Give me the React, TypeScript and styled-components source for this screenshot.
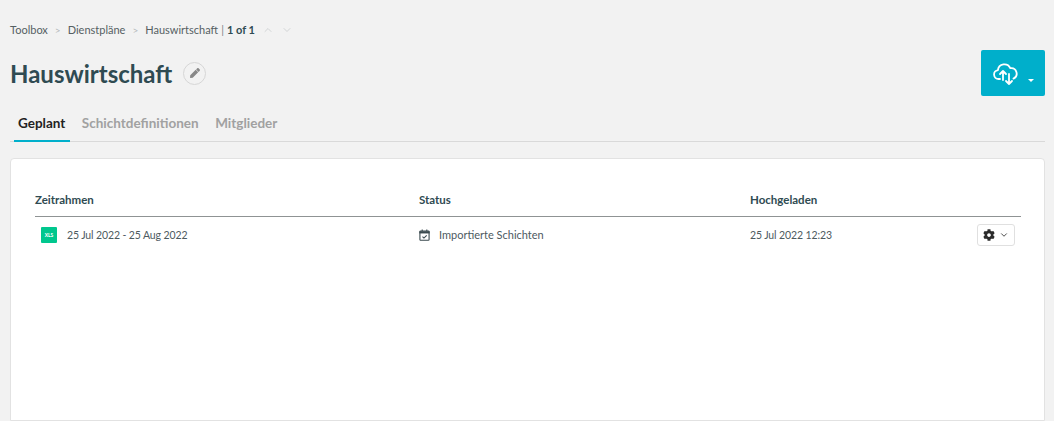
import React from 'react';
import styled, { createGlobalStyle } from 'styled-components';
import { LuChevronDown, LuChevronUp } from 'react-icons/lu';
import { FaCog, FaPen } from 'react-icons/fa';

const GlobalStyle = createGlobalStyle`
    html, body {
        margin: 0;
        height: 100%;
        overflow: hidden;
        background: #f2f2f2;
        font-family: "Lato", "Noto Sans", sans-serif;
        color: #2f4b52;
    }
`;

const Page = styled.div`
    height: 421px;
    padding: 0 9px 0 10px;
    display: flex;
    flex-direction: column;
    overflow: hidden;
`;

const Breadcrumbs = styled.nav`
    display: flex;
    align-items: center;
    height: 20px;
    margin-top: 20px;
    font-size: 11px;
    line-height: 18px;
    color: #555f63;
`;

const Separator = styled.span`
    color: #b4b9bb;
    margin: 0 7px 0 7px;
    font-size: 10px;
`;

const Pager = styled.strong`
    color: #2f4b52;
    font-weight: 700;
    margin-left: 3px;
`;

const PagerDivider = styled.span`
    color: #7c8588;
    margin-left: 3px;
`;

const PagerArrows = styled.span`
    display: flex;
    gap: 7px;
    margin-left: 7px;
    color: #d2d5d6;
    font-size: 12px;
`;

const TitleRow = styled.div`
    display: flex;
    align-items: flex-start;
    justify-content: space-between;
    margin-top: 10px;
    height: 46px;
`;

const TitleGroup = styled.div`
    display: flex;
    align-items: center;
    gap: 11px;
    height: 26px;
    margin-top: 10px;
`;

const Title = styled.h1`
    margin: 0;
    font-size: 24px;
    font-weight: 700;
    color: #2f4b52;
`;

const EditButton = styled.button`
    width: 23px;
    height: 23px;
    padding: 0;
    border: 1px solid #d6d6d6;
    border-radius: 50%;
    background: transparent;
    color: #888;
    font-size: 10px;
    display: flex;
    align-items: center;
    justify-content: center;
`;

const UploadButton = styled.button`
    width: 64px;
    height: 46px;
    padding: 0 0 0 11px;
    border: 0;
    border-radius: 2px;
    background: #00afcb;
    color: #fff;
    position: relative;
    display: flex;
    align-items: center;
`;

const Caret = styled.span`
    position: absolute;
    right: 11px;
    bottom: 14px;
    border-left: 3px solid transparent;
    border-right: 3px solid transparent;
    border-top: 3px solid #fff;
`;

const Tabs = styled.div`
    display: flex;
    gap: 7.5px;
    height: 35px;
    margin-top: 11px;
    border-bottom: 1px solid #d9d9d9;
    box-sizing: border-box;
    padding-left: 4px;
`;

const Tab = styled.div<{ $active?: boolean }>`
    padding: 0 5px 0 4px;
    height: 35px;
    box-sizing: border-box;
    line-height: 33px;
    font-size: 13.5px;
    font-weight: 700;
    color: ${p => (p.$active ? '#222' : '#a1a1a1')};
    border-bottom: 2px solid ${p => (p.$active ? '#00afcb' : 'transparent')};
`;

const Card = styled.section`
    flex: 1;
    margin-top: 16px;
    background: #fff;
    border: 1px solid #e2e2e2;
    border-radius: 4px 4px 0 0;
    padding: 23px 23px 0 24px;
`;

const Row = styled.div<{ $head?: boolean }>`
    display: grid;
    grid-template-columns: 384px 331px 1fr auto;
    align-items: center;
    height: ${p => (p.$head ? '35px' : '35px')};
    font-size: ${p => (p.$head ? '11.5px' : '11px')};
    font-weight: ${p => (p.$head ? 700 : 400)};
    color: ${p => (p.$head ? '#2f4b52' : '#4d5a5f')};
    border-bottom: ${p => (p.$head ? '1px solid #8f9394' : '0')};
    box-sizing: border-box;
`;

const Cell = styled.div`
    display: flex;
    align-items: center;
`;

const FileCell = styled(Cell)`
    padding-left: 6px;
    gap: 10px;
`;

const DateText = styled.span`
    font-size: 10.5px;
    letter-spacing: -0.12px;
    padding-top: 1px;
`;

const XlsBadge = styled.span`
    width: 16px;
    height: 16px;
    border-radius: 1px;
    background: #00c78e;
    color: #fff;
    font-size: 5px;
    font-weight: 700;
    display: flex;
    align-items: center;
    justify-content: center;
`;

const StatusIcon = styled.svg`
    width: 11px;
    height: 12px;
    color: #3b4a4f;
    margin-right: 9px;
`;

const ActionMenu = styled.button`
    width: 38px;
    height: 22px;
    margin-right: 6px;
    padding: 0;
    border: 1px solid #e0e0e0;
    border-radius: 3px;
    background: #fff;
    color: #2b2b2b;
    display: flex;
    align-items: center;
    justify-content: center;
    gap: 4px;
    font-size: 12px;
`;

const App = () => (
    <Page>
        <GlobalStyle />
        <Breadcrumbs>
            Toolbox<Separator>&gt;</Separator>
            Dienstpläne<Separator>&gt;</Separator>
            Hauswirtschaft<PagerDivider>|</PagerDivider>
            <Pager>1 of 1</Pager>
            <PagerArrows><LuChevronUp /><LuChevronDown /></PagerArrows>
        </Breadcrumbs>
        <TitleRow>
            <TitleGroup>
                <Title>Hauswirtschaft</Title>
                <EditButton><FaPen /></EditButton>
            </TitleGroup>
            <UploadButton>
                <svg width="28" height="28" viewBox="0 0 28 28" fill="none" stroke="#fff" strokeWidth="1.8" strokeLinecap="round" strokeLinejoin="round">
                    <path d="M8 20H6.5a4.5 4.5 0 0 1-.6-8.95A6.5 6.5 0 0 1 18.3 9.2 5.5 5.5 0 0 1 21.5 19.6" />
                    <path d="M11 21v-9M8 15l3-3 3 3" />
                    <path d="M17 15v10M14 22l3 3 3-3" />
                </svg>
                <Caret />
            </UploadButton>
        </TitleRow>
        <Tabs>
            <Tab $active>Geplant</Tab>
            <Tab>Schichtdefinitionen</Tab>
            <Tab>Mitglieder</Tab>
        </Tabs>
        <Card>
            <Row $head>
                <Cell>Zeitrahmen</Cell>
                <Cell>Status</Cell>
                <Cell>Hochgeladen</Cell>
            </Row>
            <Row>
                <FileCell><XlsBadge>XLS</XlsBadge><DateText>25 Jul 2022 - 25 Aug 2022</DateText></FileCell>
                <Cell>
                    <StatusIcon viewBox="0 0 12 13" fill="none" stroke="currentColor" strokeWidth="1.2">
                        <rect x="1" y="2.2" width="10" height="10" rx="0.8" />
                        <path d="M1 3h10v1.2H1z" fill="currentColor" />
                        <path d="M3.5 0.5v2M8.5 0.5v2" />
                        <path d="M3.8 8.2l1.6 1.6 3-3" />
                    </StatusIcon>
                    Importierte Schichten
                </Cell>
                <Cell><DateText>25 Jul 2022 12:23</DateText></Cell>
                <ActionMenu><FaCog /><LuChevronDown size={10} /></ActionMenu>
            </Row>
        </Card>
    </Page>
);

export default App;
